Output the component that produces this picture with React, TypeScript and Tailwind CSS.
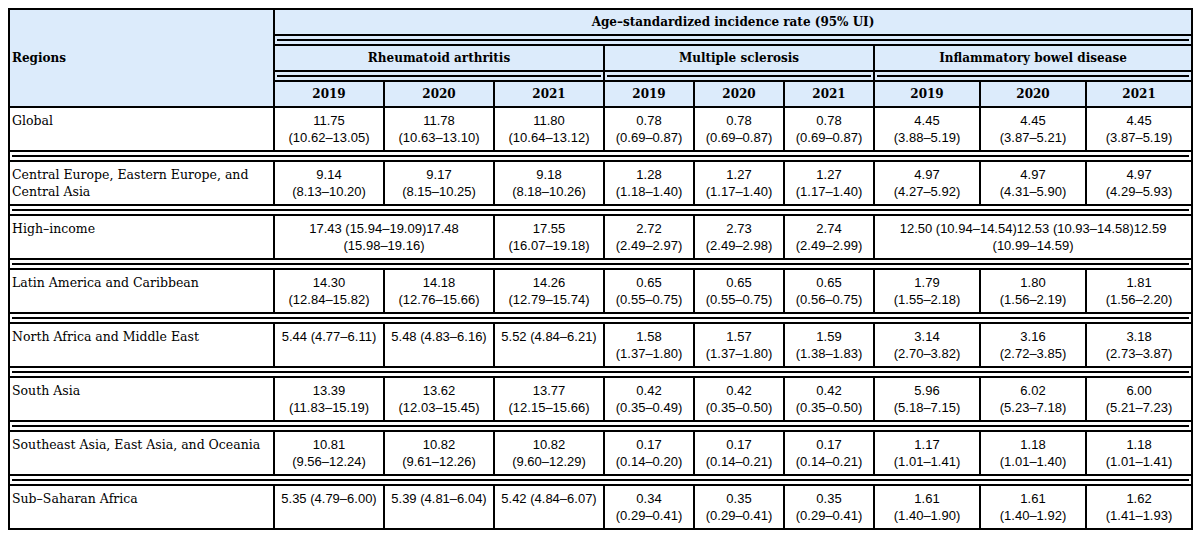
import React from "react";

type Cell = { text: string; span?: number };
type Row = { region: string; cells: Cell[] };

const rows: Row[] = [
  {
    region: "Global",
    cells: [
      { text: "11.75\n(10.62–13.05)" },
      { text: "11.78\n(10.63–13.10)" },
      { text: "11.80\n(10.64–13.12)" },
      { text: "0.78\n(0.69–0.87)" },
      { text: "0.78\n(0.69–0.87)" },
      { text: "0.78\n(0.69–0.87)" },
      { text: "4.45\n(3.88–5.19)" },
      { text: "4.45\n(3.87–5.21)" },
      { text: "4.45\n(3.87–5.19)" },
    ],
  },
  {
    region: "Central Europe, Eastern Europe, and\nCentral Asia",
    cells: [
      { text: "9.14\n(8.13–10.20)" },
      { text: "9.17\n(8.15–10.25)" },
      { text: "9.18\n(8.18–10.26)" },
      { text: "1.28\n(1.18–1.40)" },
      { text: "1.27\n(1.17–1.40)" },
      { text: "1.27\n(1.17–1.40)" },
      { text: "4.97\n(4.27–5.92)" },
      { text: "4.97\n(4.31–5.90)" },
      { text: "4.97\n(4.29–5.93)" },
    ],
  },
  {
    region: "High–income",
    cells: [
      { text: "17.43 (15.94–19.09)17.48\n(15.98–19.16)", span: 2 },
      { text: "17.55\n(16.07–19.18)" },
      { text: "2.72\n(2.49–2.97)" },
      { text: "2.73\n(2.49–2.98)" },
      { text: "2.74\n(2.49–2.99)" },
      { text: "12.50 (10.94–14.54)12.53 (10.93–14.58)12.59\n(10.99–14.59)", span: 3 },
    ],
  },
  {
    region: "Latin America and Caribbean",
    cells: [
      { text: "14.30\n(12.84–15.82)" },
      { text: "14.18\n(12.76–15.66)" },
      { text: "14.26\n(12.79–15.74)" },
      { text: "0.65\n(0.55–0.75)" },
      { text: "0.65\n(0.55–0.75)" },
      { text: "0.65\n(0.56–0.75)" },
      { text: "1.79\n(1.55–2.18)" },
      { text: "1.80\n(1.56–2.19)" },
      { text: "1.81\n(1.56–2.20)" },
    ],
  },
  {
    region: "North Africa and Middle East",
    cells: [
      { text: "5.44 (4.77–6.11)" },
      { text: "5.48 (4.83–6.16)" },
      { text: "5.52 (4.84–6.21)" },
      { text: "1.58\n(1.37–1.80)" },
      { text: "1.57\n(1.37–1.80)" },
      { text: "1.59\n(1.38–1.83)" },
      { text: "3.14\n(2.70–3.82)" },
      { text: "3.16\n(2.72–3.85)" },
      { text: "3.18\n(2.73–3.87)" },
    ],
  },
  {
    region: "South Asia",
    cells: [
      { text: "13.39\n(11.83–15.19)" },
      { text: "13.62\n(12.03–15.45)" },
      { text: "13.77\n(12.15–15.66)" },
      { text: "0.42\n(0.35–0.49)" },
      { text: "0.42\n(0.35–0.50)" },
      { text: "0.42\n(0.35–0.50)" },
      { text: "5.96\n(5.18–7.15)" },
      { text: "6.02\n(5.23–7.18)" },
      { text: "6.00\n(5.21–7.23)" },
    ],
  },
  {
    region: "Southeast Asia, East Asia, and Oceania",
    cells: [
      { text: "10.81\n(9.56–12.24)" },
      { text: "10.82\n(9.61–12.26)" },
      { text: "10.82\n(9.60–12.29)" },
      { text: "0.17\n(0.14–0.20)" },
      { text: "0.17\n(0.14–0.21)" },
      { text: "0.17\n(0.14–0.21)" },
      { text: "1.17\n(1.01–1.41)" },
      { text: "1.18\n(1.01–1.40)" },
      { text: "1.18\n(1.01–1.41)" },
    ],
  },
  {
    region: "Sub–Saharan Africa",
    cells: [
      { text: "5.35 (4.79–6.00)" },
      { text: "5.39 (4.81–6.04)" },
      { text: "5.42 (4.84–6.07)" },
      { text: "0.34\n(0.29–0.41)" },
      { text: "0.35\n(0.29–0.41)" },
      { text: "0.35\n(0.29–0.41)" },
      { text: "1.61\n(1.40–1.90)" },
      { text: "1.61\n(1.40–1.92)" },
      { text: "1.62\n(1.41–1.93)" },
    ],
  },
];

const diseases = ["Rheumatoid arthritis", "Multiple sclerosis", "Inflammatory bowel disease"];
const years = ["2019", "2020", "2021"];

const th =
  "border-2 border-black bg-[#dcebfb] px-[2px] pt-[4px] pb-[3px] text-center text-[12px] leading-[17px] font-bold font-['DejaVu_Serif',serif]";

function Separator({ span }: { span: number }) {
  return (
    <td colSpan={span} className="border-2 border-black bg-[#dcebfb] px-[2px] py-[3px]">
      <div className="h-[2px] bg-black" />
    </td>
  );
}

export default function App() {
  return (
    <div className="min-h-screen bg-white p-2 text-black">
      <table className="w-[1184px] table-fixed border-collapse border-2 border-black">
        <colgroup>
          <col className="w-[265px]" />
          <col className="w-[110px]" />
          <col className="w-[110px]" />
          <col className="w-[110px]" />
          <col className="w-[90px]" />
          <col className="w-[90px]" />
          <col className="w-[90px]" />
          <col className="w-[106px]" />
          <col className="w-[106px]" />
          <col className="w-[106px]" />
        </colgroup>
        <thead>
          <tr>
            <th rowSpan={5} className={`${th} !text-left align-middle`}>
              Regions
            </th>
            <th colSpan={9} className={th}>
              Age–standardized incidence rate (95% UI)
            </th>
          </tr>
          <tr>
            <Separator span={9} />
          </tr>
          <tr>
            {diseases.map((d) => (
              <th key={d} colSpan={3} className={th}>
                {d}
              </th>
            ))}
          </tr>
          <tr>
            {diseases.map((d) => (
              <Separator key={d} span={3} />
            ))}
          </tr>
          <tr>
            {diseases.map((d) =>
              years.map((y) => (
                <th key={d + y} className={th}>
                  {y}
                </th>
              ))
            )}
          </tr>
        </thead>
        <tbody>
          {rows.map((row, i) => (
            <React.Fragment key={row.region}>
              <tr>
                <td className="border-2 border-black px-[2px] py-[4px] align-top whitespace-pre text-[12.5px] leading-[17px] font-['DejaVu_Serif',serif]">
                  {row.region}
                </td>
                {row.cells.map((c, j) => (
                  <td
                    key={j}
                    colSpan={c.span}
                    className="border-2 border-black px-[2px] py-[4px] align-top text-center whitespace-pre text-[13px] leading-[17px] font-['Liberation_Sans',sans-serif]"
                  >
                    {c.text}
                  </td>
                ))}
              </tr>
              {i < rows.length - 1 && (
                <tr>
                  <td colSpan={10} className="border-2 border-black bg-white px-[2px] py-[3px]">
                    <div className="h-[2px] bg-black" />
                  </td>
                </tr>
              )}
            </React.Fragment>
          ))}
        </tbody>
      </table>
    </div>
  );
}
